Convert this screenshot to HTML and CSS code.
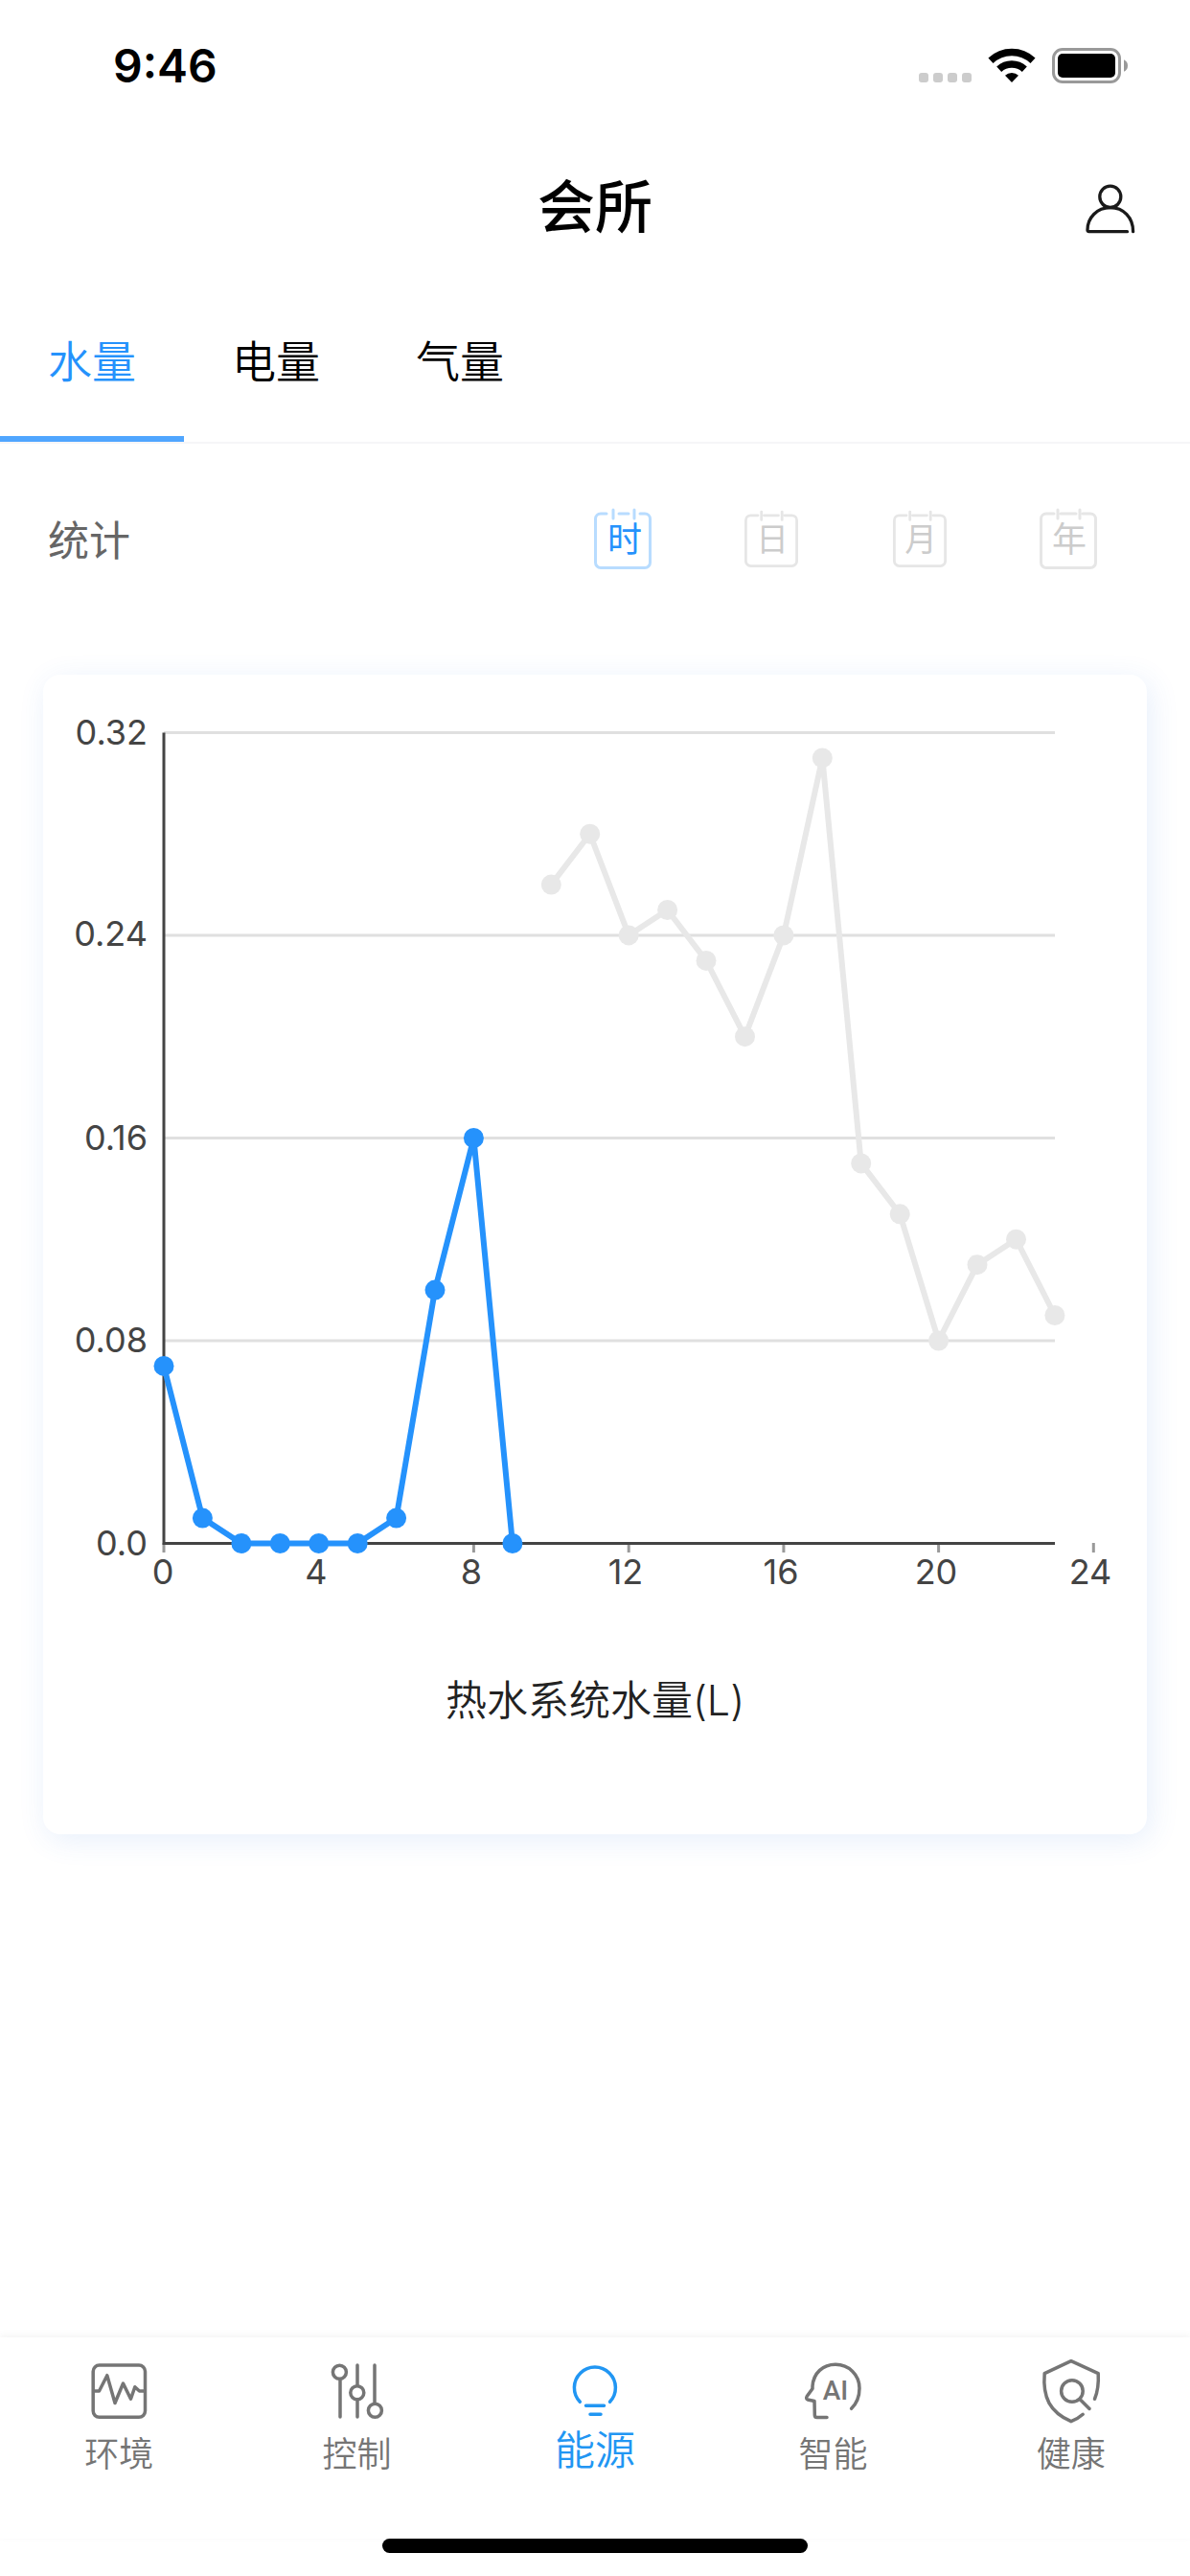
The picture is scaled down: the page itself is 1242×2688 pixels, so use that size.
FILE: index.html
```html
<!DOCTYPE html>
<html lang="zh-CN">
<head>
<meta charset="utf-8">
<meta name="viewport" content="width=device-width, initial-scale=1">
<title>会所</title>
<link rel="stylesheet" href="styles.css">
</head>
<body>
<div class="app">
  <div class="status">
    <span class="status-time">9:46</span>
    <div class="status-icons">
      <svg width="55" height="36" viewBox="0 0 55 36" fill="#ccc" aria-hidden="true">
        <rect x="0" y="26" width="10" height="10" rx="3"/><rect x="15" y="26" width="10" height="10" rx="3"/><rect x="30" y="26" width="10" height="10" rx="3"/><rect x="45" y="26" width="10" height="10" rx="3"/>
      </svg>
      <svg width="50" height="36" viewBox="0 0 50 36" aria-hidden="true">
        <g fill="none" stroke="#000" stroke-width="7.4">
          <path d="M3 13.200A32 32 0 0 1 47 13.200"/>
          <path d="M11.700 22.200A19.600 19.600 0 0 1 38.300 22.200"/>
        </g>
        <path d="M25 36L18 28.800A10.200 10.200 0 0 1 32 28.800z"/>
      </svg>
      <svg width="80" height="37" viewBox="0 0 80 37" aria-hidden="true">
        <rect x="1.500" y="1.500" width="69" height="34" rx="9.500" fill="none" stroke="#999" stroke-width="3"/>
        <rect x="6" y="6" width="60" height="25" rx="5"/>
        <path d="M75 12.200q4 2 4 6.300t-4 6.300z" fill="#999"/>
      </svg>
    </div>
  </div>

  <header class="header">
    <h1 class="title">会所</h1>
    <button class="profile" type="button" aria-label="我的">
      <svg width="60" height="60" viewBox="0 0 60 60" fill="none" stroke="#1a1a1a" stroke-width="3.300" stroke-linecap="round" aria-hidden="true">
        <ellipse cx="29.800" cy="17.300" rx="11" ry="11.200"/>
        <path d="M47.500 53.700H7.500Q6 53.700 6 52C6 39 16 28.700 29.800 28.700S53.600 39 53.600 53.700"/>
      </svg>
    </button>
  </header>

  <nav class="tabs">
    <a class="tab tab-active" href="#water" aria-current="page">水量</a>
    <a class="tab" href="#power">电量</a>
    <a class="tab" href="#gas">气量</a>
  </nav>

  <main class="content">
    <div class="toolbar">
      <h2 class="toolbar-title">统计</h2>
      <div class="periods">
        <button class="period period-active" type="button" aria-pressed="true">
          <svg width="60" height="66" viewBox="0 0 60 66" aria-hidden="true">
            <path class="frame" d="M13 6H7a5.500 5.500 0 0 0-5.500 5.500V57a5.500 5.500 0 0 0 5.500 5.500H53a5.500 5.500 0 0 0 5.500-5.500V11.500A5.500 5.500 0 0 0 53 6H48M26 6H36M20 2V11M42 2V11"/>
            <text x="32" y="46" text-anchor="middle">时</text>
          </svg>
        </button>
        <button class="period" type="button" aria-pressed="false">
          <svg width="56" height="62" viewBox="0 0 60 66" aria-hidden="true">
            <path class="frame" d="M15 6H7a5.500 5.500 0 0 0-5.500 5.500V57a5.500 5.500 0 0 0 5.500 5.500H53a5.500 5.500 0 0 0 5.500-5.500V11.500A5.500 5.500 0 0 0 53 6H45M22 6H38M19 2V11M42 2V11"/>
            <text x="31" y="46" text-anchor="middle">日</text>
          </svg>
        </button>
        <button class="period" type="button" aria-pressed="false">
          <svg width="56" height="62" viewBox="0 0 60 66" aria-hidden="true">
            <path class="frame" d="M15 6H7a5.500 5.500 0 0 0-5.500 5.500V57a5.500 5.500 0 0 0 5.500 5.500H53a5.500 5.500 0 0 0 5.500-5.500V11.500A5.500 5.500 0 0 0 53 6H45M22 6H38M19 2V11M42 2V11"/>
            <text x="31" y="46" text-anchor="middle">月</text>
          </svg>
        </button>
        <button class="period" type="button" aria-pressed="false">
          <svg width="60" height="66" viewBox="0 0 60 66" aria-hidden="true">
            <path class="frame" d="M15 6H7a5.500 5.500 0 0 0-5.500 5.500V57a5.500 5.500 0 0 0 5.500 5.500H53a5.500 5.500 0 0 0 5.500-5.500V11.500A5.500 5.500 0 0 0 53 6H45M22 6H38M19 2V11M42 2V11"/>
            <text x="31" y="46" text-anchor="middle">年</text>
          </svg>
        </button>
      </div>
    </div>

    <figure class="card">
      <svg class="chart" viewBox="0 0 1152 960" role="img" aria-label="热水系统水量">
        <defs>
          <marker id="dot-now" markerUnits="userSpaceOnUse" markerWidth="22" markerHeight="22" refX="11" refY="11"><circle cx="11" cy="11" r="10.500" fill="#2592fc"/></marker>
          <marker id="dot-past" markerUnits="userSpaceOnUse" markerWidth="22" markerHeight="22" refX="11" refY="11"><circle cx="11" cy="11" r="10.500" fill="#e8e8e8"/></marker>
        </defs>
        <path class="grid" d="M126 60.500H1056M126 272H1056M126 483.500H1056M126 695H1056"/>
        <path class="ticks" d="M126 906V916M287.700 906V916M449.400 906V916M611.200 906V916M772.900 906V916M934.600 906V916M1096.300 906V916"/>
        <path class="axis" d="M126 60.500V906.500H1056"/>
        <polyline class="line line-past" points="530.3,219.1 570.7,166.2 611.2,271.9 651.6,245.5 692,298.4 732.5,377.7 772.9,271.9 813.3,86.9 853.7,509.9 894.2,562.8 934.6,695 975,615.7 1015.5,589.2 1055.9,668.5"/>
        <polyline class="line line-now" points="126,721.4 166.4,880.1 206.900,906.500 247.300,906.500 287.700,906.500 328.200,906.500 368.600,880.100 409,642.100 449.400,483.500 489.900,906.500"/>
        <g class="labels" text-anchor="end">
          <text x="109" y="73">0.32</text>
          <text x="109" y="283">0.24</text>
          <text x="109" y="496">0.16</text>
          <text x="109" y="707">0.08</text>
          <text x="109" y="919">0.0</text>
        </g>
        <g class="labels" text-anchor="middle">
          <text x="125" y="949">0</text>
          <text x="285" y="949">4</text>
          <text x="447" y="949">8</text>
          <text x="608" y="949">12</text>
          <text x="770" y="949">16</text>
          <text x="932" y="949">20</text>
          <text x="1093" y="949">24</text>
        </g>
      </svg>
      <figcaption class="caption">热水系统水量(L)</figcaption>
    </figure>
  </main>

  <nav class="bottom">
    <a class="item" href="#env">
      <svg class="icon" viewBox="0 0 72 72" aria-hidden="true">
        <rect x="9.200" y="9" width="54.300" height="54.300" rx="6.500"/>
        <path d="M11 36H15.500L23.800 19.700L32 48.500L40.500 28L48.500 44.300L52.800 31.700L57.500 36H62"/>
      </svg>
      <span class="label">环境</span>
    </a>
    <a class="item" href="#control">
      <svg class="icon" viewBox="0 0 72 72" aria-hidden="true">
        <circle cx="17.400" cy="16.300" r="7"/><path d="M18 24V63"/>
        <circle cx="35.800" cy="37.700" r="7"/><path d="M36 9V30M36 46V63"/>
        <circle cx="54.400" cy="56.300" r="7"/><path d="M54 9V48"/>
      </svg>
      <span class="label">控制</span>
    </a>
    <a class="item item-active" href="#energy" aria-current="page">
      <svg class="icon" viewBox="0 0 72 72" aria-hidden="true">
        <path d="M20.300 47.300A21.500 21.500 0 1 1 51.500 47.300M26.500 51.300H45.500M31 60.300H42"/>
      </svg>
      <span class="label">能源</span>
    </a>
    <a class="item" href="#smart">
      <svg class="icon" viewBox="0 0 72 72" aria-hidden="true">
        <path d="M30 63.500H19.600Q17.300 63.500 17.300 61L17 46.500L10 45Q7.800 44 9.200 41.500L15 33.500V31C16 17 26 8.300 39 8.300C53 8.300 64 19 64 33C64 42 61 49 55.600 54.300"/>
        <text class="icon-text" x="39" y="45" text-anchor="middle">AI</text>
      </svg>
      <span class="label">智能</span>
    </a>
    <a class="item" href="#health">
      <svg class="icon" viewBox="0 0 72 72" aria-hidden="true">
        <path d="M60.500 44.300C64 36 64.800 28 64.200 17.700L35.900 4.700L8.200 17.700C6 43 14 58 35.900 67.700Q43 65 48.200 60.300"/>
        <circle cx="36.900" cy="36" r="11.300"/><path d="M46 45.500L55 54.500"/>
      </svg>
      <span class="label">健康</span>
    </a>
  </nav>
  <div class="home"></div>
</div>
</body>
</html>
```
FILE: styles.css
```css
* { box-sizing: border-box; }

body {
  margin: 0;
  background: #fff;
  color: #000;
  font-family: Inter, "Noto Sans CJK SC", sans-serif;
}

svg { display: block; }

a { color: inherit; text-decoration: none; }

button {
  padding: 0;
  border: 0;
  background: none;
  font: inherit;
  cursor: pointer;
}

.app {
  display: flex;
  flex-direction: column;
  min-height: 100vh;
}

/* Status bar */
.status {
  display: flex;
  align-items: center;
  justify-content: space-between;
  height: 136px;
  padding: 0 64px 0 118px;
}
.status-time { font-size: 48px; font-weight: 600; }
.status-icons { display: flex; gap: 17px; }

/* Header */
.header {
  display: grid;
  grid-template-columns: 1fr auto 1fr;
  align-items: center;
  height: 164px;
  padding: 0 53px;
}
.title {
  grid-column: 2;
  margin: 0;
  padding-bottom: 4px;
  font-size: 60px;
  font-weight: 500;
  line-height: 88px;
}
.profile { justify-self: end; }

/* Category tabs */
.tabs {
  display: flex;
  border-bottom: 2px solid #f6f6f8;
}
.tab {
  padding: 41px 50px 42px;
  border-bottom: 6px solid transparent;
  font-size: 46px;
  font-weight: 350;
  line-height: 72px;
}
.tab-active { border-color: #50a6ff; color: #2592fc; }

/* Period switch */
.content { padding-bottom: 48px; }
.toolbar {
  display: flex;
  align-items: center;
  justify-content: space-between;
  height: 200px;
  padding: 0 50px;
}
.toolbar-title {
  margin: 0;
  padding-bottom: 4px;
  color: #666;
  font-size: 43px;
  font-weight: 400;
}
.periods { display: flex; }
.period {
  display: flex;
  align-items: center;
  justify-content: center;
  width: 155px;
  height: 96px;
}
.frame {
  fill: none;
  stroke: #e6e6e6;
  stroke-width: 3;
  stroke-linecap: round;
}
.period text { fill: #ccc; font-size: 36px; }
.period-active .frame { stroke: #b8dcff; }
.period-active text { fill: #2592fc; }

/* Chart card */
.card {
  margin: 41px 45px 0;
  padding-bottom: 108px;
  border-radius: 18px;
  background: #fff;
  box-shadow: 4px 6px 30px rgba(60, 120, 220, 0.12);
}
.chart { width: 100%; height: auto; }
.grid { fill: none; stroke: #e0e0e0; stroke-width: 3; }
.ticks { fill: none; stroke: #999; stroke-width: 3; }
.axis { fill: none; stroke: #444; stroke-width: 3; }
.line { fill: none; stroke-width: 6; stroke-linejoin: round; }
.line-past {
  stroke: #e8e8e8;
  marker: url(#dot-past);
}
.line-now {
  stroke: #2592fc;
  marker: url(#dot-now);
}
.labels { fill: #444; font-size: 36px; }
.caption {
  margin-top: 78px;
  color: #222;
  font-size: 43px;
  font-weight: 350;
  line-height: 64px;
  text-align: center;
}

/* Bottom navigation */
.bottom {
  display: flex;
  margin-top: auto;
  padding: 20px 0 58px;
  background: #fff;
  box-shadow: 0 -2px 8px rgba(0, 0, 0, 0.05);
}
.item {
  display: flex;
  flex: 1;
  flex-direction: column;
  align-items: center;
  color: #757575;
}
.icon {
  width: 72px;
  height: 72px;
  fill: none;
  stroke: currentColor;
  stroke-width: 3.5;
  stroke-linecap: round;
  stroke-linejoin: round;
}
.icon-text {
  fill: currentColor;
  stroke: none;
  font-family: Roboto, sans-serif;
  font-size: 28px;
  font-weight: 500;
}
.label { font-size: 36px; font-weight: 350; line-height: 60px; }
.item-active { color: #2196f3; }
.item-active .label { font-size: 42px; line-height: 52px; }

.home {
  align-self: center;
  width: 444px;
  height: 15px;
  margin-bottom: 24px;
  border-radius: 8px;
  background: #000;
}
```
